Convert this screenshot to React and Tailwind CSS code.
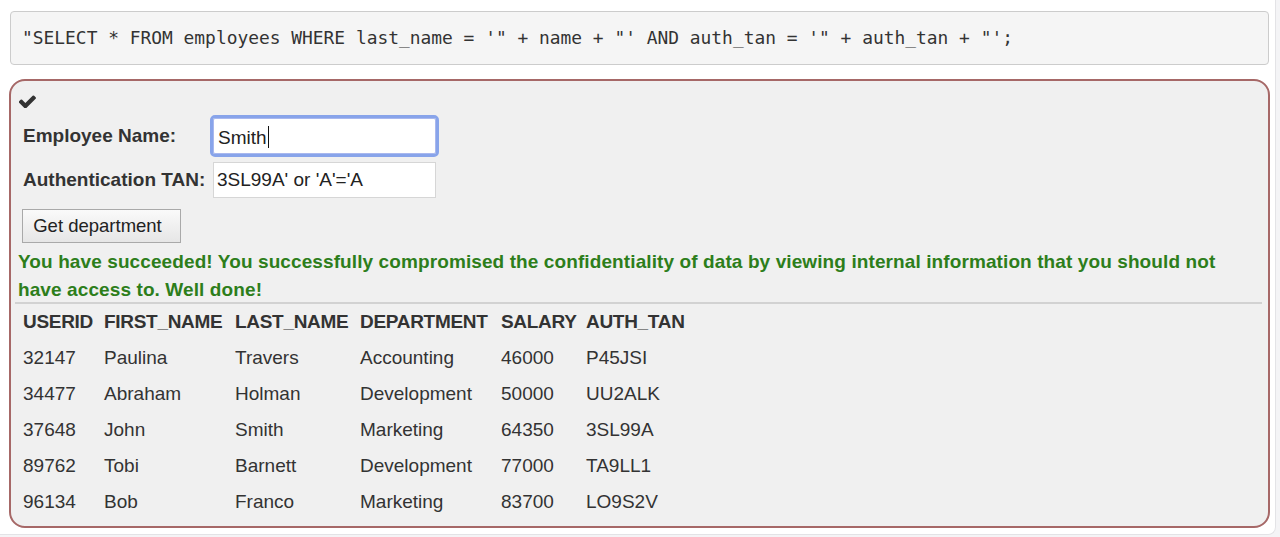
import React from "react";

const rows = [
  ["32147", "Paulina", "Travers", "Accounting", "46000", "P45JSI"],
  ["34477", "Abraham", "Holman", "Development", "50000", "UU2ALK"],
  ["37648", "John", "Smith", "Marketing", "64350", "3SL99A"],
  ["89762", "Tobi", "Barnett", "Development", "77000", "TA9LL1"],
  ["96134", "Bob", "Franco", "Marketing", "83700", "LO9S2V"],
];

const cols = ["USERID", "FIRST_NAME", "LAST_NAME", "DEPARTMENT", "SALARY", "AUTH_TAN"];
const widths = ["w-[81px]", "w-[131px]", "w-[125px]", "w-[141px]", "w-[85px]", "w-[110px]"];

function Check() {
  return (
    <svg width="17" height="13" viewBox="140 330 1535 1100" className="fill-[#333]">
      <path d="M1671 566q0 40-28 68l-724 724-136 136q-28 28-68 28t-68-28l-136-136-362-362q-28-28-28-68t28-68l136-136q28-28 68-28t68 28l294 295 656-657q28-28 68-28t68 28l136 136q28 28 28 68z" />
    </svg>
  );
}

export default function App() {
  return (
    <div className="min-h-screen bg-[#f4f4f6] font-['Liberation_Sans',Arial,sans-serif] text-[#333]">
      <div className="w-[1276px] h-[535px] bg-white rounded-br-[8px] border-r border-b border-[#e3e3e6] pt-[11px] px-[9px]">
        <div className="ml-[1px] w-[1259px] h-[54px] flex items-center rounded-[4px] border border-[#cccccc] bg-[#f5f5f5] pl-[11px] font-['DejaVu_Sans_Mono',monospace] text-[17.9px] text-[#333]">
          "SELECT * FROM employees WHERE last_name = '" + name + "' AND auth_tan = '" + auth_tan + "';
        </div>

        <div className="mt-[14px] w-[1261px] h-[449px] rounded-[16px] border-2 border-[#a66867] bg-[#f0f0f0] px-[12px]">
          <div className="pt-[14px] -ml-[4px] h-[37px]">
            <Check />
          </div>

          <div className="flex items-center h-[36px]">
            <label className="w-[190px] font-bold text-[19px]">Employee Name:</label>
            <div className="w-[223px] h-[36px] bg-white border border-[#a9b8ee] outline-[3px] outline outline-[#88a4ea] rounded-[2px] flex items-center pl-[4px] pt-[4px] text-[19px] text-[#222]">
              Smith<span className="inline-block w-[1px] h-[22px] bg-[#111] ml-[1px] -mt-[2px]" />
            </div>
          </div>

          <div className="mt-[8px] flex items-center h-[36px]">
            <label className="w-[190px] font-bold text-[19px]">Authentication TAN:</label>
            <div className="w-[223px] h-[36px] bg-white border border-[#d6d6d6] flex items-center pl-[3px] pt-[1px] text-[19px] text-[#222]">
              3SL99A' or 'A'='A
            </div>
          </div>

          <button className="mt-[11px] -ml-[1px] h-[34px] w-[159px] pr-[8px] border border-[#a9a9a9] bg-gradient-to-b from-[#fafafa] to-[#e6e6e6] text-[18.5px] text-[#222]">
            Get department
          </button>

          <p className="mt-[5px] -ml-[5px] font-bold text-[19px] leading-[28px] text-[#2d7e1b] tracking-[0.1px]">
            You have succeeded! You successfully compromised the confidentiality of data by viewing internal information that you should not have access to. Well done!
          </p>

          <div className="-mt-[2px] -ml-[8px] -mr-[6px] h-[2px] bg-[#d2d2d2]" />

          <table className="border-collapse">
            <thead>
              <tr className="h-[36px]">
                {cols.map((c, i) => (
                  <th key={c} className={`${widths[i]} text-left font-bold text-[19px] tracking-[-0.3px] p-0`}>
                    {c}
                  </th>
                ))}
              </tr>
            </thead>
            <tbody>
              {rows.map((r) => (
                <tr key={r[0]} className="h-[36px]">
                  {r.map((v, i) => (
                    <td key={i} className="text-left text-[19px] p-0">
                      {v}
                    </td>
                  ))}
                </tr>
              ))}
            </tbody>
          </table>
        </div>
      </div>
    </div>
  );
}
